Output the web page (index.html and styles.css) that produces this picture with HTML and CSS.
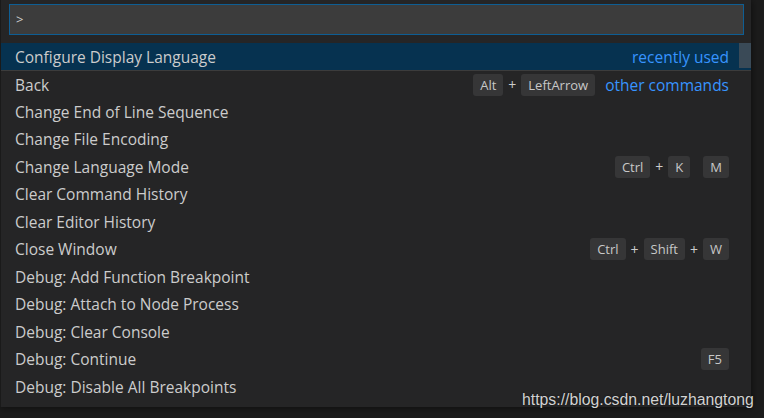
FILE: index.html
```html
<!DOCTYPE html>
<html>
<head>
<meta charset="utf-8">
<link rel="stylesheet" href="styles.css">
</head>
<body>
<div class="palette">
  <div class="input-wrap"><div class="input">&gt;</div></div>
  <div class="list">
    <div class="row selected">
      <span class="label">Configure Display Language</span>
      <span class="right"><span class="desc">recently used</span></span>
      <div class="scrollbar"></div>
    </div>
    <div class="row sep">
      <span class="label">Back</span>
      <span class="right">
        <span class="keys"><kbd>Alt</kbd><span class="plus">+</span><kbd>LeftArrow</kbd></span>
        <span class="desc">other commands</span>
      </span>
    </div>
    <div class="row"><span class="label">Change End of Line Sequence</span></div>
    <div class="row"><span class="label">Change File Encoding</span></div>
    <div class="row">
      <span class="label">Change Language Mode</span>
      <span class="right"><span class="keys"><kbd>Ctrl</kbd><span class="plus">+</span><kbd>K</kbd><span class="chord"></span><kbd>M</kbd></span></span>
    </div>
    <div class="row"><span class="label">Clear Command History</span></div>
    <div class="row"><span class="label">Clear Editor History</span></div>
    <div class="row">
      <span class="label">Close Window</span>
      <span class="right"><span class="keys"><kbd>Ctrl</kbd><span class="plus">+</span><kbd>Shift</kbd><span class="plus">+</span><kbd>W</kbd></span></span>
    </div>
    <div class="row"><span class="label">Debug: Add Function Breakpoint</span></div>
    <div class="row"><span class="label">Debug: Attach to Node Process</span></div>
    <div class="row"><span class="label">Debug: Clear Console</span></div>
    <div class="row">
      <span class="label">Debug: Continue</span>
      <span class="right"><span class="keys"><kbd>F5</kbd></span></span>
    </div>
    <div class="row"><span class="label">Debug: Disable All Breakpoints</span></div>
  </div>
</div>
<div class="watermark">https://blog.csdn.net/luzhangtong</div>
</body>
</html>
```
FILE: styles.css
```css
html, body {
  margin: 0;
  padding: 0;
  width: 764px;
  height: 418px;
  overflow: hidden;
  background: #1c1c1c;
}
body {
  position: relative;
  font-family: "Open Sans", "Noto Sans", sans-serif;
  color: #cccccc;
}
.palette {
  width: 751px;
  height: 407px;
  background: #252526;
  box-shadow: 0 0 8px rgba(0,0,0,0.6);
  border-left: 1px solid #1a1a1a;
  box-sizing: border-box;
  overflow: hidden;
}
.input-wrap {
  padding: 4px 7px 0 8px;
  height: 39px;
  box-sizing: border-box;
}
.input {
  height: 31px;
  box-sizing: border-box;
  background: #3c3c3c;
  border: 1px solid #0e5e94;
  padding-left: 6px;
  font-size: 13px;
  line-height: 29px;
  color: #cccccc;
}
.list {
  margin-top: 4px;
}
.row {
  position: relative;
  display: flex;
  align-items: center;
  height: 27.5px;
  padding: 0 22px 0 14px;
  font-size: 15.5px;
  white-space: nowrap;
}
.row.selected {
  background: #063250;
  height: 27px;
}
.row.sep {
  border-top: 1px solid #3c3c3c;
  height: 27px;
}
.label {
  flex: 1;
}
.right {
  display: flex;
  align-items: center;
  gap: 10px;
}
.desc {
  color: #3794ff;
}
.keys {
  display: flex;
  align-items: center;
}
kbd {
  font-family: "Open Sans", "Noto Sans", sans-serif;
  font-size: 13px;
  line-height: 22px;
  height: 22px;
  padding: 0 7px;
  background: #363637;
  border-radius: 3px;
  color: #c8c8c8;
}
.plus {
  font-size: 14px;
  width: 18px;
  text-align: center;
  color: #cccccc;
}
.chord {
  width: 13px;
}
.scrollbar {
  position: absolute;
  right: 0;
  top: 0;
  width: 12px;
  height: 25px;
  background: #3a4a57;
}
.watermark {
  position: absolute;
  left: 522px;
  top: 391px;
  font-family: "Liberation Sans", Arial, sans-serif;
  font-size: 15.8px;
  color: #d2d2d2;
  text-shadow: 0 0 2px rgba(0,0,0,0.7);
}
```
